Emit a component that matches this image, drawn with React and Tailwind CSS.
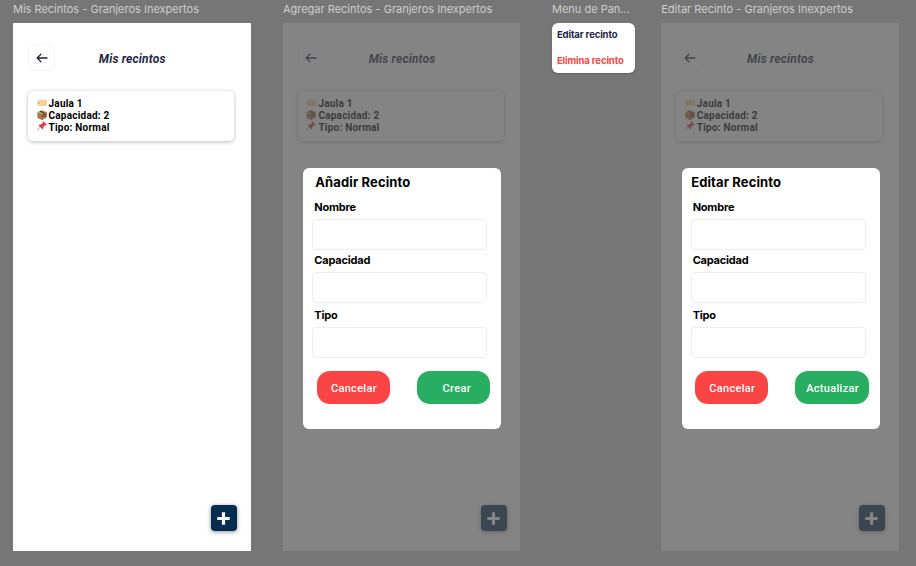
import React from "react";

function Tag() {
  return (
    <svg className="-mt-[2px] h-[10px] w-[10px] shrink-0" viewBox="0 0 10 10">
      <path d="M2 1.8H9.4Q9.9 1.8 9.9 2.3V7.5Q9.9 8 9.4 8H2L.2 6.4V3.4Z" fill="#f7cf98" />
      <circle cx="1.9" cy="4.9" r=".6" fill="#b98a55" />
    </svg>
  );
}

function Box() {
  return (
    <svg className="-mt-[2px] h-[10px] w-[10px] shrink-0" viewBox="0 0 10 10">
      <path d="M.3 2.2 5.2 0 9.8 1.9 5 4.2Z" fill="#c89a6a" />
      <path d="M.3 2.2 5 4.2V10L.5 7.9Z" fill="#a87545" />
      <path d="M5 4.2 9.8 1.9 9.6 7.6 5 10Z" fill="#8a5a33" />
      <path d="M2.2 1.4 6.7 3.4V5.3L7.9 4.6V2.8L3.6.8Z" fill="#5f3d22" />
      <path d="M6 7.7 7.6 6.9V8L6 8.8Z" fill="#d9b68c" />
    </svg>
  );
}

function Pin() {
  return (
    <svg className="-mt-[3px] h-[10px] w-[10px] shrink-0" viewBox="0 0 10 10">
      <path d="M3.6 5.4.5 9.2" stroke="#9aa5ad" strokeWidth=".9" strokeLinecap="round" />
      <path d="M6.2.2 9.8 3.7 8.7 4.4 7.9 4.2 6.4 5.7Q6.8 7.4 5.7 8.4L1.5 4.2Q2.7 3.1 4.3 3.5L5.8 2.1 5.5 1.2Z" fill="#dc3545" />
    </svg>
  );
}

function Row({ icon, children }) {
  return (
    <div className="flex h-3 items-center gap-[2px]">
      {icon}
      <span className="whitespace-nowrap">{children}</span>
    </div>
  );
}

function Phone({ label, wide, children }) {
  return (
    <section className={wide ? "w-[238px] shrink-0" : "w-[237.4px] shrink-0"}>
      <FrameLabel>{label}</FrameLabel>
      <div className="relative flex h-[528px] flex-col bg-white">
        <header className="flex h-[67.4px] pl-[15px] pt-[21px]">
          <div className="flex h-[27px] w-[27px] items-center justify-center rounded-md border border-[#f4f4f5]">
            <svg className="h-3 w-3" viewBox="0 0 12 12" fill="none" stroke="#17213f" strokeWidth="1.3" strokeLinecap="round" strokeLinejoin="round">
              <path d="M11 6H1.2M5 2.1 1.2 6 5 9.9" />
            </svg>
          </div>
          <h1 className="ml-[43.8px] mt-[6.5px] h-4 whitespace-nowrap font-['Roboto',sans-serif] text-[12px] font-bold italic leading-4 tracking-[0.18px] text-[#1d2644]">
            Mis recintos
          </h1>
        </header>
        <div className="ml-[15px] h-[50px] w-[206px] rounded-[5px] bg-white pl-[8.5px] pt-[7px] font-['Roboto',sans-serif] text-[10px] font-bold leading-3 tracking-[0.22px] text-black shadow-[0_1px_4px_rgba(0,0,0,0.28)]">
          <Row icon={<Tag />}>Jaula 1</Row>
          <Row icon={<Box />}>Capacidad: 2</Row>
          <Row icon={<Pin />}>Tipo: Normal</Row>
        </div>
        <div className="mb-[20px] ml-[197.7px] mt-auto flex h-[26px] w-[26px] items-center justify-center rounded bg-[#062c4f] shadow-[0_1px_4px_rgba(0,0,0,0.45)]">
          <svg className="h-[13px] w-[13px]" viewBox="0 0 13 13" stroke="white" strokeWidth="3.2">
            <path d="M6.5 .3V12.7M.3 6.5H12.7" />
          </svg>
        </div>
        {children}
      </div>
    </section>
  );
}

function FrameLabel({ children }) {
  return (
    <div className="h-[23.4px] whitespace-nowrap pt-[1px] font-['Inter',sans-serif] text-[11px] leading-4 text-[#cdcdcd]">
      {children}
    </div>
  );
}

function Field({ name, gap }) {
  return (
    <div className={gap}>
      <div className="ml-[2px] h-[18px] font-['Inter',sans-serif] text-[11px] font-bold leading-[13px] tracking-[-0.2px] text-black">{name}</div>
      <div className="h-[31px] w-[175px] rounded-[4px] border border-[#ededed] bg-white" />
    </div>
  );
}

function Dialog({ title, titlePad, action, actionPad }) {
  return (
    <div className="absolute inset-0 bg-[#525252b5]">
      <div className="ml-[20.4px] mt-[144.6px] h-[261px] w-[198px] rounded-[6px] bg-white pl-[9px] pt-[6px]">
        <h2 className={"h-4 whitespace-nowrap font-['Inter',sans-serif] text-[13px] font-bold leading-4 tracking-[0.12px] text-black " + titlePad}>{title}</h2>
        <Field name="Nombre" gap="mt-[11px]" />
        <Field name="Capacidad" gap="mt-[4px]" />
        <Field name="Tipo" gap="mt-[6px]" />
        <div className="mt-[13.5px] flex gap-[27px] pl-[4.5px] font-['Roboto',sans-serif] text-[11px] font-medium tracking-[0.32px] text-white">
          <button className="h-[33px] w-[73.3px] rounded-[13px] bg-[#fb4444] pl-[1px] pt-[2px]">Cancelar</button>
          <button className={"h-[33px] w-[73.3px] rounded-[13px] bg-[#28ae60] pt-[2px] " + actionPad}>{action}</button>
        </div>
      </div>
    </div>
  );
}

export default function App() {
  return (
    <main className="flex h-[566px] w-[916px] items-start overflow-hidden bg-[#767676] pl-[13px]">
      <Phone label="Mis Recintos - Granjeros Inexpertos" wide />
      <div className="w-[31.9px] shrink-0" />
      <Phone label="Agregar Recintos - Granjeros Inexpertos">
        <Dialog title="Añadir Recinto" titlePad="pl-[3px]" action="Crear" actionPad="pl-[6px]" />
      </Phone>
      <section className="ml-[31.7px] mr-[26.7px] w-[82.6px] shrink-0">
        <FrameLabel>Menu de Pan...</FrameLabel>
        <div className="flex h-[50px] flex-col gap-[13px] rounded-[6px] bg-white pl-[5px] pt-[4.5px] font-['Inter',sans-serif] text-[9.5px] font-bold leading-[13px] tracking-[-0.12px] shadow-[0_1px_2px_rgba(0,0,0,0.2)]">
          <span className="whitespace-nowrap text-[#1d2644]">Editar recinto</span>
          <span className="whitespace-nowrap text-[#fb4444]">Elimina recinto</span>
        </div>
      </section>
      <Phone label="Editar Recinto - Granjeros Inexpertos">
        <Dialog title="Editar Recinto" titlePad="pl-[0.5px]" action="Actualizar" actionPad="pl-[1px]" />
      </Phone>
    </main>
  );
}
